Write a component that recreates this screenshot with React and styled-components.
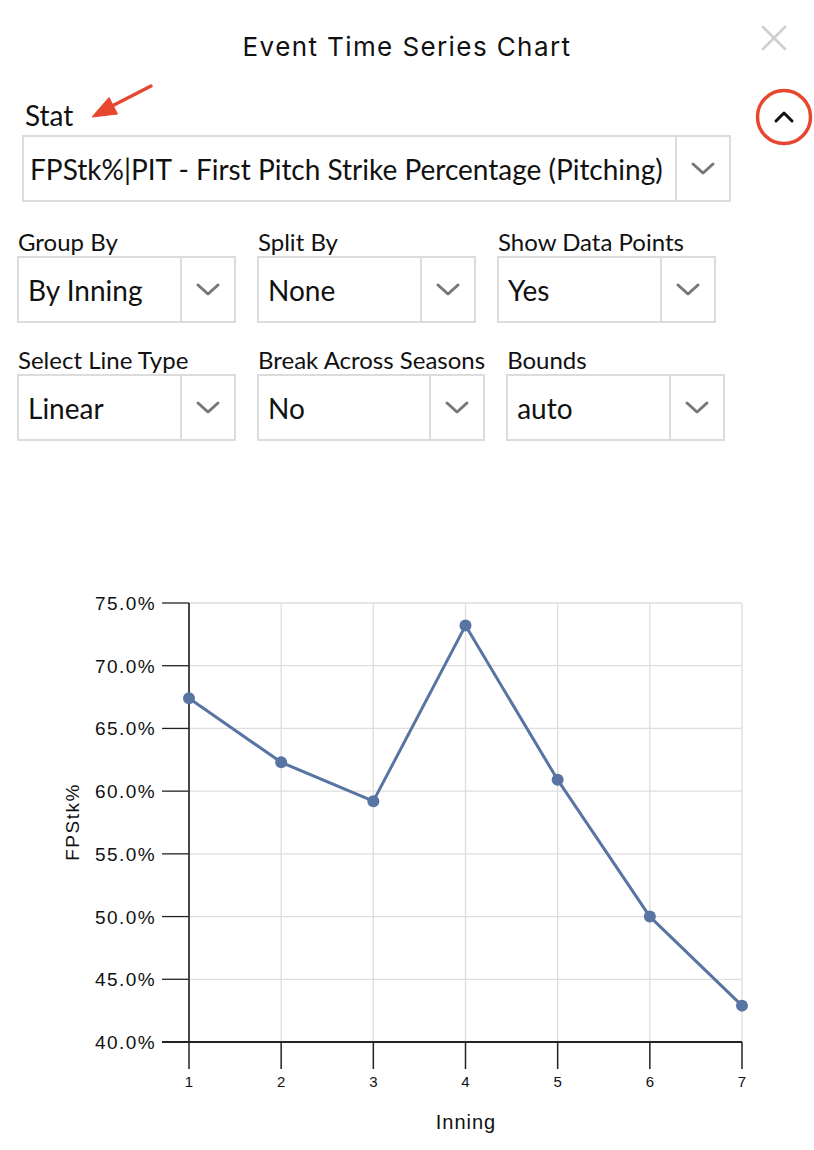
import React from "react";
import styled, { createGlobalStyle } from "styled-components";

const GlobalStyle = createGlobalStyle`
  html, body { margin: 0; padding: 0; background: #fff; }
  body { font-family: Lato, "Open Sans", sans-serif; color: #111; }
`;

const Page = styled.div`
  width: 814px;
  height: 1150px;
  position: relative;
  overflow: hidden;
  background: #fff;
`;

const Header = styled.div`
  display: grid;
  grid-template-columns: 1fr auto 1fr;
  align-items: center;
  height: 92px;
`;

const Title = styled.h1`
  grid-column: 2;
  margin: 0;
  font-family: Inter, "Liberation Sans", sans-serif;
  font-size: 26px;
  font-weight: 400;
  letter-spacing: 1.4px;
  color: #111;
`;

const CloseButton = styled.button`
  grid-column: 3;
  justify-self: end;
  align-self: start;
  margin: 22px 24px 0 0;
  padding: 0;
  border: 0;
  background: none;
  width: 32px;
  height: 32px;
  cursor: pointer;
`;

const StatSection = styled.div`
  display: grid;
  grid-template-columns: 709px auto;
  column-gap: 23px;
  padding-left: 22px;
  margin-top: 7px;
`;

const FieldWrap = styled.div`
  display: flex;
  flex-direction: column;
  min-width: ${(p) => p.$min || 219}px;
  position: relative;
`;

const Label = styled.label`
  font-size: ${(p) => (p.$big ? 28 : 24)}px;
  line-height: ${(p) => (p.$big ? 32 : 27)}px;
  margin-bottom: ${(p) => (p.$big ? 4 : 1)}px;
  padding-left: ${(p) => (p.$big ? 3 : 1)}px;
  color: #111;
  white-space: nowrap;
`;

const Box = styled.div`
  display: flex;
  height: 67px;
  box-sizing: border-box;
  border: 2px solid #dcdcdc;
  background: #fff;
`;

const Value = styled.div`
  flex: 1;
  display: flex;
  align-items: center;
  padding-left: ${(p) => (p.$big ? 6 : 9)}px;
  font-size: 28px;
  color: #111;
  white-space: nowrap;
`;

const ChevronCell = styled.div`
  width: 52px;
  border-left: 2px solid #dcdcdc;
  display: flex;
  align-items: center;
  justify-content: center;
`;

const Arrow = styled.svg`
  position: absolute;
  left: 40px;
  top: -20px;
  pointer-events: none;
`;

const Toggle = styled.button`
  width: 60px;
  height: 60px;
  margin-top: -12px;
  padding: 0;
  border: 0;
  background: none;
  cursor: pointer;
`;

const Row = styled.div`
  display: flex;
  gap: 21px;
  padding-left: 17px;
  margin-top: ${(p) => p.$top}px;
`;

const ChartSvg = styled.svg`
  display: block;
  margin-top: 20px;
`;

const Chevron = () => (
  <svg width="28" height="16" viewBox="0 0 28 16">
    <path d="M4 3 L14 12 L24 3" fill="none" stroke="#777" strokeWidth="3" strokeLinecap="round" strokeLinejoin="round" />
  </svg>
);

const Select = ({ label, value, min, big, children }) => (
  <FieldWrap $min={min}>
    <Label $big={big}>{label}</Label>
    {children}
    <Box>
      <Value $big={big}>{value}</Value>
      <ChevronCell>
        <Chevron />
      </ChevronCell>
    </Box>
  </FieldWrap>
);

const data = [67.4, 62.3, 59.2, 73.2, 60.9, 50.0, 42.9];
const X0 = 189;
const X1 = 742;
const Y0 = 602;
const Y1 = 1041;
const xs = (i) => X0 + ((X1 - X0) / 6) * i;
const ys = (v) => Y0 + ((75 - v) / 35) * (Y1 - Y0);
const yTicks = [75, 70, 65, 60, 55, 50, 45, 40];

const Chart = () => {
  const pts = data.map((v, i) => `${xs(i)},${ys(v)}`).join(" ");
  return (
    <ChartSvg width="814" height="690" viewBox="0 460 814 690">
      <g fontFamily='"Liberation Sans", Arial, sans-serif' fill="#111">
        {yTicks.map((t) => (
          <g key={t}>
            <line x1={X0} x2={X1} y1={ys(t)} y2={ys(t)} stroke="#dedede" strokeWidth="1.3" />
            <line x1={162} x2={X0} y1={ys(t)} y2={ys(t)} stroke="#222" strokeWidth="1.3" />
            <text x={156} y={ys(t) + 7} textAnchor="end" fontSize="19" letterSpacing="1.4">
              {t.toFixed(1)}%
            </text>
          </g>
        ))}
        {data.map((_, i) => (
          <g key={i}>
            <line x1={xs(i)} x2={xs(i)} y1={Y0} y2={Y1} stroke="#dedede" strokeWidth="1.3" />
            <line x1={xs(i)} x2={xs(i)} y1={Y1} y2={1068} stroke="#222" strokeWidth="1.5" />
            <text x={xs(i)} y={1086} textAnchor="middle" fontSize="15">
              {i + 1}
            </text>
          </g>
        ))}
        <line x1={X0} x2={X0} y1={Y0} y2={Y1} stroke="#111" strokeWidth="1.5" />
        <line x1={162} x2={X1} y1={Y1} y2={Y1} stroke="#222" strokeWidth="2" />
        <polyline points={pts} fill="none" stroke="#5874a3" strokeWidth="3" strokeLinejoin="round" />
        {data.map((v, i) => (
          <circle key={i} cx={xs(i)} cy={ys(v)} r="6" fill="#5874a3" />
        ))}
        <text x={466} y={1128} textAnchor="middle" fontSize="20" letterSpacing="1">
          Inning
        </text>
        <text transform="translate(79 821) rotate(-90)" textAnchor="middle" fontSize="19" letterSpacing="1.5">
          FPStk%
        </text>
      </g>
    </ChartSvg>
  );
};

export default function App() {
  return (
    <>
      <GlobalStyle />
      <Page>
        <Header>
          <Title>Event Time Series Chart</Title>
          <CloseButton aria-label="Close">
            <svg width="32" height="32" viewBox="0 0 32 32">
              <path d="M5 5 L27 27 M27 5 L5 27" stroke="#cfcfd3" strokeWidth="2.6" strokeLinecap="round" />
            </svg>
          </CloseButton>
        </Header>
        <StatSection>
          <Select label="Stat" value="FPStk%|PIT - First Pitch Strike Percentage (Pitching)" big min={709}>
            <Arrow width="100" height="50" viewBox="0 0 100 50">
              <path d="M89 7 L50 27" stroke="#e8472f" strokeWidth="3.5" strokeLinecap="round" />
              <path d="M30 38 L47 18.5 L55.5 35 Z" fill="#e8472f" strokeLinejoin="round" stroke="#e8472f" strokeWidth="1" />
            </Arrow>
          </Select>
          <Toggle aria-label="Collapse">
            <svg width="60" height="60" viewBox="0 0 60 60">
              <circle cx="30" cy="30" r="26.5" fill="none" stroke="#e8472f" strokeWidth="3.5" />
              <path d="M22 34 L30 26 L38 34" fill="none" stroke="#111" strokeWidth="3" strokeLinecap="round" strokeLinejoin="round" />
            </svg>
          </Toggle>
        </StatSection>
        <Row $top={26}>
          <Select label="Group By" value="By Inning" />
          <Select label="Split By" value="None" />
          <Select label="Show Data Points" value="Yes" />
        </Row>
        <Row $top={23}>
          <Select label="Select Line Type" value="Linear" />
          <Select label="Break Across Seasons" value="No" />
          <Select label="Bounds" value="auto" />
        </Row>
        <Chart />
      </Page>
    </>
  );
}
